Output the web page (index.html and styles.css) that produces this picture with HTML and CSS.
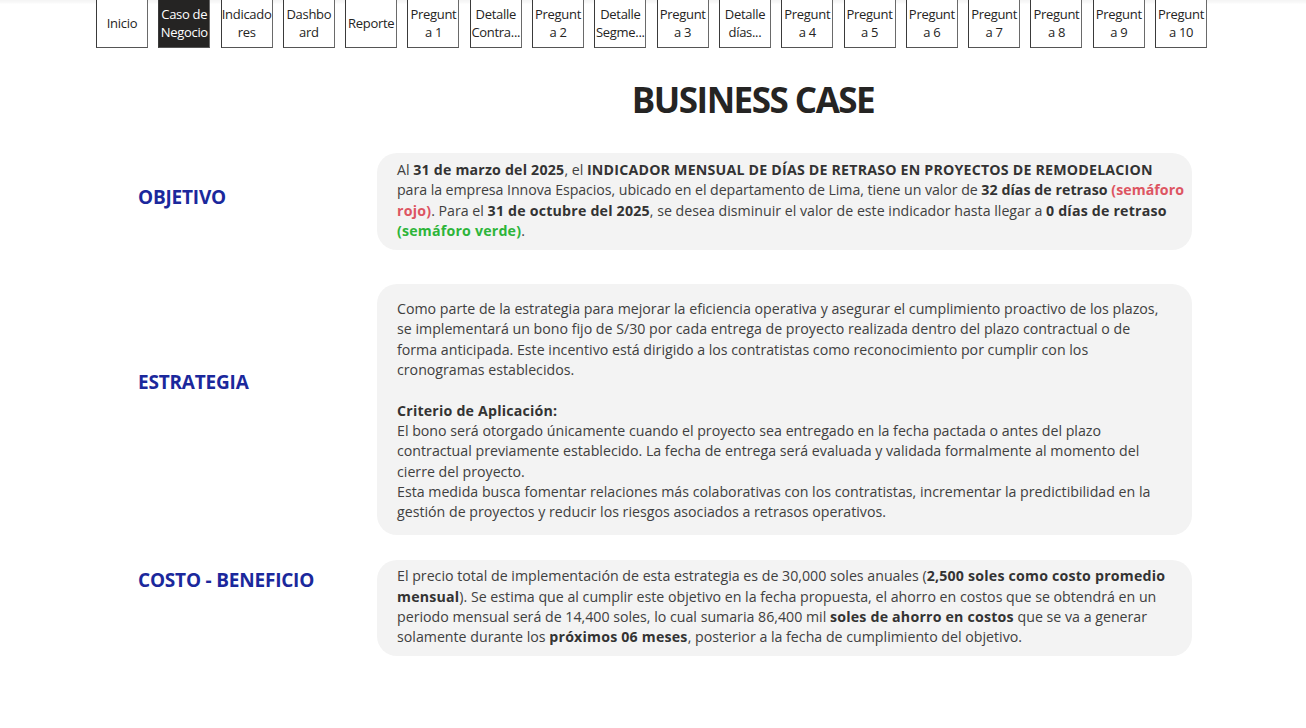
FILE: index.html
```html
<!DOCTYPE html>
<html lang="es">
<head>
<meta charset="utf-8">
<title>Business Case</title>
<link rel="stylesheet" href="styles.css">
</head>
<body>
<nav class="nav">
  <a class="nav-btn">Inicio</a>
  <a class="nav-btn nav-btn--active">Caso de<br>Negocio</a>
  <a class="nav-btn">Indicado<br>res</a>
  <a class="nav-btn">Dashbo<br>ard</a>
  <a class="nav-btn">Reporte</a>
  <a class="nav-btn">Pregunt<br>a 1</a>
  <a class="nav-btn">Detalle<br>Contra...</a>
  <a class="nav-btn">Pregunt<br>a 2</a>
  <a class="nav-btn">Detalle<br>Segme...</a>
  <a class="nav-btn">Pregunt<br>a 3</a>
  <a class="nav-btn">Detalle<br>días...</a>
  <a class="nav-btn">Pregunt<br>a 4</a>
  <a class="nav-btn">Pregunt<br>a 5</a>
  <a class="nav-btn">Pregunt<br>a 6</a>
  <a class="nav-btn">Pregunt<br>a 7</a>
  <a class="nav-btn">Pregunt<br>a 8</a>
  <a class="nav-btn">Pregunt<br>a 9</a>
  <a class="nav-btn">Pregunt<br>a 10</a>
</nav>

<h1 class="title">BUSINESS CASE</h1>

<main class="sections">
  <h2 class="label label--obj">OBJETIVO</h2>
  <div class="card card--obj">
    Al <b>31 de marzo del 2025</b>, el <b>INDICADOR MENSUAL DE DÍAS DE RETRASO EN PROYECTOS DE REMODELACION</b><br>
    <span class="tight">para la empresa Innova Espacios, ubicado en el departamento de Lima, tiene un valor de <b>32 días de retraso</b> <b class="red">(semáforo</b></span><br>
    <b class="red">rojo)</b>. Para el <b>31 de octubre del 2025</b>, se desea disminuir el valor de este indicador hasta llegar a <b>0 días de retraso</b><br>
    <b class="green">(semáforo verde)</b>.
  </div>

  <h2 class="label label--est">ESTRATEGIA</h2>
  <div class="card card--est">
    Como parte de la estrategia para mejorar la eficiencia operativa y asegurar el cumplimiento proactivo de los plazos,<br>
    se implementará un bono fijo de S/30 por cada entrega de proyecto realizada dentro del plazo contractual o de<br>
    forma anticipada. Este incentivo está dirigido a los contratistas como reconocimiento por cumplir con los<br>
    cronogramas establecidos.<br>
    <br>
    <b>Criterio de Aplicación:</b><br>
    El bono será otorgado únicamente cuando el proyecto sea entregado en la fecha pactada o antes del plazo<br>
    contractual previamente establecido. La fecha de entrega será evaluada y validada formalmente al momento del<br>
    cierre del proyecto.<br>
    Esta medida busca fomentar relaciones más colaborativas con los contratistas, incrementar la predictibilidad en la<br>
    gestión de proyectos y reducir los riesgos asociados a retrasos operativos.
  </div>

  <h2 class="label label--cb">COSTO - BENEFICIO</h2>
  <div class="card card--cb">
    El precio total de implementación de esta estrategia es de 30,000 soles anuales (<b>2,500 soles como costo promedio<br>
    mensual</b>). Se estima que al cumplir este objetivo en la fecha propuesta, el ahorro en costos que se obtendrá en un<br>
    periodo mensual será de 14,400 soles, lo cual sumaria 86,400 mil <b>soles de ahorro en costos</b> que se va a generar<br>
    solamente durante los <b>próximos 06 meses</b>, posterior a la fecha de cumplimiento del objetivo.
  </div>
</main>
</body>
</html>
```

FILE: styles.css
```css
* { box-sizing: border-box; }

html, body {
  margin: 0;
  padding: 0;
  width: 1306px;
  height: 728px;
  overflow: hidden;
}

body {
  font-family: "Open Sans", "Noto Sans", sans-serif;
  color: #252423;
  background: linear-gradient(#f4f4f4, #fafafa 3px, #ffffff 4px);
}

.nav {
  display: flex;
  gap: 10.3px;
  padding-left: 96px;
  margin-top: -1px;
}

.nav-btn {
  flex: 0 0 52px;
  height: 49px;
  padding-bottom: 2px;
  border: 1px solid #3a3a3a;
  border-right-color: #6a6a6a;
  border-bottom-color: #555;
  background: #fff;
  color: #252423;
  font-size: 13px;
  line-height: 18px;
  letter-spacing: -0.3px;
  display: flex;
  align-items: center;
  justify-content: center;
  text-align: center;
  white-space: nowrap;
  overflow: hidden;
}

.nav-btn--active {
  background: #252423;
  color: #fff;
}

.title {
  margin: 32px 0 0 0;
  padding-left: 200px;
  text-align: center;
  font-size: 35px;
  line-height: 40px;
  font-weight: 700;
  letter-spacing: -1.5px;
  color: #252423;
}

.sections {
  display: grid;
  grid-template-columns: 239px 815px;
  margin: 33px 0 0 138px;
}

.label {
  margin: 0;
  font-size: 19px;
  line-height: 24px;
  font-weight: 700;
  color: #1b289c;
  letter-spacing: -0.2px;
  align-self: start;
}

.label--obj { margin-top: 32px; }
.label--est { margin-top: 86px; }
.label--cb  { margin-top: 8px; }

.card {
  background: #f3f3f3;
  border-radius: 20px;
  font-size: 14.2px;
  line-height: 20.3px;
  color: #404040;
  letter-spacing: 0;
  white-space: nowrap;
}

.card b { color: #333; font-weight: 700; letter-spacing: 0.2px; }
.card b.red { color: #dd5562; }
.card b.green { color: #2db53a; }

.tight { letter-spacing: -0.06px; }
.tight b { letter-spacing: 0.05px; }

.card--obj { padding: 7px 20px 9px; margin-bottom: 34px; }
.card--est { padding: 15px 20px 13px; margin-bottom: 25px; }
.card--cb  { padding: 6px 20px 8px; }
```
